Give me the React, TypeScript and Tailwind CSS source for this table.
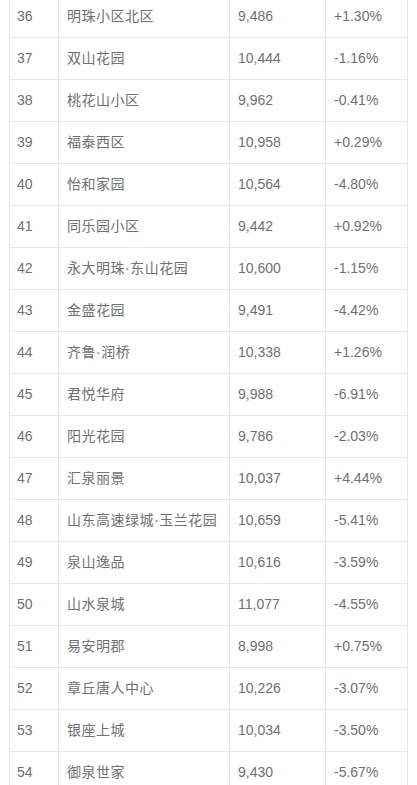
import React from "react";

const rows: [string, string, string, string][] = [
  ["36", "明珠小区北区", "9,486", "+1.30%"],
  ["37", "双山花园", "10,444", "-1.16%"],
  ["38", "桃花山小区", "9,962", "-0.41%"],
  ["39", "福泰西区", "10,958", "+0.29%"],
  ["40", "怡和家园", "10,564", "-4.80%"],
  ["41", "同乐园小区", "9,442", "+0.92%"],
  ["42", "永大明珠·东山花园", "10,600", "-1.15%"],
  ["43", "金盛花园", "9,491", "-4.42%"],
  ["44", "齐鲁·润桥", "10,338", "+1.26%"],
  ["45", "君悦华府", "9,988", "-6.91%"],
  ["46", "阳光花园", "9,786", "-2.03%"],
  ["47", "汇泉丽景", "10,037", "+4.44%"],
  ["48", "山东高速绿城·玉兰花园", "10,659", "-5.41%"],
  ["49", "泉山逸品", "10,616", "-3.59%"],
  ["50", "山水泉城", "11,077", "-4.55%"],
  ["51", "易安明郡", "8,998", "+0.75%"],
  ["52", "章丘唐人中心", "10,226", "-3.07%"],
  ["53", "银座上城", "10,034", "-3.50%"],
  ["54", "御泉世家", "9,430", "-5.67%"],
];

export default function App() {
  return (
    <div
      className="w-[417px] h-[785px] overflow-hidden bg-white text-[14px] text-[#707070]"
      style={{ fontFamily: '"Liberation Sans", "Noto Sans CJK SC", sans-serif' }}
    >
      <div className="ml-[9px] -mt-[4px] w-[399px] border-l border-[#e8e8e8]">
        {rows.map((r) => (
          <div key={r[0]} className="flex h-[42px] border-b border-[#e8e8e8]">
            <div className="w-[49px] border-r border-[#e8e8e8] pl-[7px] flex items-center">{r[0]}</div>
            <div className="w-[171px] border-r border-[#e8e8e8] pl-2 flex items-center whitespace-nowrap tracking-[0.5px]">{r[1]}</div>
            <div className="w-[96px] border-r border-[#e8e8e8] pl-2 flex items-center">{r[2]}</div>
            <div className="w-[82px] border-r border-[#e8e8e8] pl-2 flex items-center">{r[3]}</div>
          </div>
        ))}
      </div>
    </div>
  );
}
